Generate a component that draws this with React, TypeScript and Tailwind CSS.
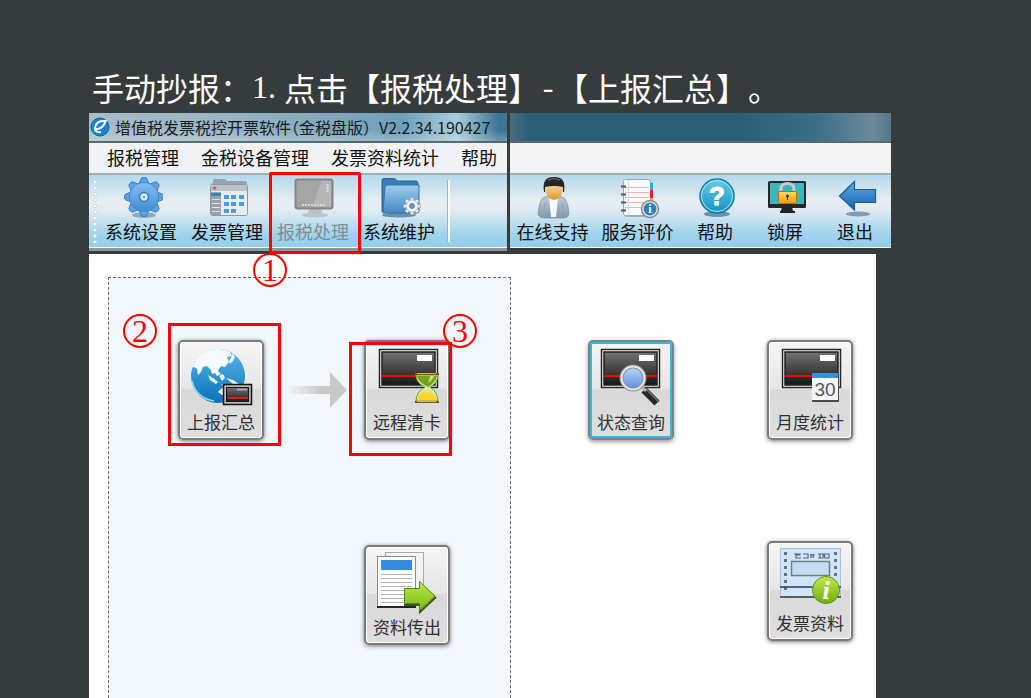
import React from "react";

interface ToolItem {
     label: string;
     width: string;
     icon: React.ReactNode;
     disabled?: boolean;
     step?: number;
}

const GEAR_TEETH = [0, 45, 90, 135, 180, 225, 270, 315];

function ToolSvg({ children }: { children: React.ReactNode }) {
     return (
          <svg className="block w-11 h-11 shrink-0" viewBox="0 0 44 44" fill="none" aria-hidden="true">
               {children}
          </svg>
     );
}

function GearIcon() {
     return (
          <ToolSvg>
               <ellipse cx="25" cy="40" rx="12" ry="3" fill="#5d7f99" opacity="0.6" />
               <g fill="#5ba3e8" stroke="#3f7fc0" strokeWidth="1">
                    {GEAR_TEETH.map((a) => (
                         <path key={a} d="M20 9 L22.500 3 Q25 2 27.500 3 L30 9 Z" transform={`rotate(${a} 25 22)`} />
                    ))}
                    <circle cx="25" cy="22" r="14.500" />
               </g>
               <circle cx="25" cy="22" r="14" fill="url(#gearBlue)" />
               <circle cx="25" cy="22" r="4.500" fill="#cfe6f8" stroke="#347abc" strokeWidth="1.500" />
               <circle cx="25" cy="22" r="1" fill="#5a93cc" />
          </ToolSvg>
     );
}

function InvoiceFolderIcon() {
     return (
          <ToolSvg>
               <path d="M8 8 V5 Q8 4 10 4 H19 Q21 4 22 6 H40 Q42 6 42 8 V14 H6 V9 Z" fill="#93a5b4" />
               <rect x="5.500" y="9.500" width="37" height="31" rx="2" fill="#e8ecef" stroke="#8d979f" />
               <path d="M6 10 H42 V16 H6 Z" fill="#b9c1c7" />
               <ellipse cx="9.500" cy="13" rx="2" ry="1.500" fill="#e2574c" />
               <rect x="6" y="17" width="10" height="23" fill="#9ba3aa" />
               <rect x="6" y="18" width="10" height="3" fill="#2d86cc" />
               <path d="M7 24.500 H15 M7 28.500 H15 M7 32.500 H15 M7 36.500 H15" stroke="#dde2e5" />
               <path d="M19 20h5v4h-5z M26 20h5v4h-5z M34 20h5v4h-5z M19 27h5v4h-5z M26 27h5v4h-5z M34 27h5v4h-5z M19 34h5v4h-5z M26 34h5v4h-5z" fill="#4b9edc" />
          </ToolSvg>
     );
}

function MonitorIcon() {
     return (
          <ToolSvg>
               <ellipse cx="24" cy="40" rx="13" ry="2.500" fill="#b9c4cc" />
               <path d="M18 33 H30 L31 40 H17 Z" fill="#bfc3c6" />
               <rect x="4.500" y="4.500" width="37" height="29" rx="2" fill="#a4a4a4" stroke="#858585" strokeWidth="2" />
               <path d="M31 6 H40 V32 H21 Z" fill="#b6b6b6" />
               <path d="M11 30 H35" stroke="#d8d8d8" strokeWidth="2" strokeDasharray="2 1" />
               <path d="M36.500 9 V17" stroke="#dedede" strokeWidth="2" strokeDasharray="2 1" />
          </ToolSvg>
     );
}

function FolderGearIcon() {
     return (
          <ToolSvg>
               <ellipse cx="22" cy="40" rx="17" ry="2.500" fill="#6b8ea5" />
               <path d="M5 37 V5 Q5 3.500 7 3.500 H17 Q19 3.500 20 6 H39 Q41 6 41 8 V37 Z" fill="#3a7db4" stroke="#2a659a" />
               <path d="M8 12 L10 10 H42 V36 Q42 38 40 38 H6 Z" fill="url(#folderBlue)" stroke="#2f74b0" />
               <g fill="#eef2f4" stroke="#93a0aa" strokeWidth="0.700">
                    {GEAR_TEETH.map((a) => (
                         <path key={a} d="M33 26 L33.500 22.500 H36.500 L37 26 Z" transform={`rotate(${a} 35 31)`} />
                    ))}
                    <circle cx="35" cy="31" r="6" />
               </g>
               <circle cx="35" cy="31" r="5.500" fill="#eef2f4" />
               <circle cx="35" cy="31" r="2.500" fill="#5a93c0" stroke="#7b8994" />
          </ToolSvg>
     );
}

function PersonIcon() {
     return (
          <ToolSvg>
               <path d="M7 39 Q8 26 12 23 Q17 20 22 20 Q28 20 33 23 Q37 26 38 39 Q37 43 32 43 H13 Q8 43 7 39 Z" fill="url(#suit)" stroke="#778fa3" strokeWidth="0.700" />
               <path d="M18 22 H27 L25 42 H20 Z" fill="#f6f9fb" />
               <path d="M14 28 L12 42 M31 28 L33 42" stroke="#8ba0b2" />
               <path d="M14 10 Q14 24 23 25 Q32 24 32 10 Z" fill="url(#skin)" />
               <path d="M13 17 Q11 6 17 3 Q23 1 29 3 Q35 6 33 17 H32 V12 Q23 10 14 12 V17 Z" fill="#262626" />
               <path d="M17 5 Q23 2 29 5" stroke="#777777" />
          </ToolSvg>
     );
}

function NotebookIcon() {
     return (
          <ToolSvg>
               <rect x="8" y="6" width="28" height="36" rx="2" fill="#7f929f" opacity="0.600" />
               <rect x="7.500" y="4.500" width="27" height="36" rx="2" fill="#fafafa" stroke="#a2a7aa" />
               <path d="M9 12.500 H33 M9 17.500 H33 M9 22.500 H33 M9 27.500 H33 M9 32.500 H29" stroke="#f1b2ad" />
               <path d="M12.500 5 V40" stroke="#bfe3f2" />
               <path d="M5 11.500 H10 M5 19.500 H10 M5 27.500 H10 M5 35.500 H10" stroke="#545454" strokeWidth="2" />
               <path d="M34 8h3v7h-3z" fill="#24b2dc" />
               <path d="M34 15h3v8h-3z" fill="#dd2338" />
               <path d="M34 23h3v4h-3z" fill="#f0ad2c" />
               <circle cx="34" cy="34" r="8.500" fill="#e6ecec" stroke="#858c8c" strokeWidth="1.500" />
               <circle cx="34" cy="34" r="6.500" fill="#347fb9" />
               <text x="34" y="38" fill="#ffffff" fontSize="12" fontWeight="700" fontFamily="Liberation Serif, serif" textAnchor="middle">i</text>
          </ToolSvg>
     );
}

function HelpIcon() {
     return (
          <ToolSvg>
               <ellipse cx="24" cy="39" rx="13" ry="3" fill="#3c6f8c" opacity="0.700" />
               <circle cx="24" cy="21" r="17" fill="url(#helpBlue)" stroke="#1680ae" strokeWidth="1.500" />
               <circle cx="24" cy="21" r="15.500" stroke="#a4e4f3" />
               <text x="24" y="30" fill="#ffffff" stroke="#ffffff" fontSize="26" fontWeight="700" fontFamily="Liberation Sans, sans-serif" textAnchor="middle">?</text>
          </ToolSvg>
     );
}

function LockScreenIcon() {
     return (
          <ToolSvg>
               <path d="M19 32 H29 L30 36 H32 V38 H17 V36 H18 Z" fill="#222222" />
               <rect x="5" y="6" width="38" height="27" rx="1.500" fill="#262626" />
               <rect x="7" y="8" width="34" height="21" fill="#35b8bf" />
               <path d="M18 17 V14 Q18 8.500 24.500 8.500 Q31 8.500 31 14 V17" stroke="#c5c9cc" strokeWidth="3" />
               <rect x="15.500" y="16.500" width="18" height="12" rx="1" fill="url(#lockGold)" stroke="#a6750d" />
               <circle cx="24.500" cy="21" r="1.500" fill="#493008" />
               <path d="M24.500 21 V25" stroke="#493008" />
          </ToolSvg>
     );
}

function ExitIcon() {
     return (
          <ToolSvg>
               <ellipse cx="25" cy="39" rx="12" ry="2.500" fill="#708999" opacity="0.800" />
               <path d="M6.500 21 L21.500 6.500 V14.500 H42.500 V27.500 H21.500 V35 Z" fill="url(#exitBlue)" stroke="#175d9e" strokeWidth="1.200" />
          </ToolSvg>
     );
}

function CardSvg({ children }: { children: React.ReactNode }) {
     return (
          <svg className="block w-[66px] h-[66px] shrink-0" viewBox="0 0 66 66" fill="none" aria-hidden="true">
               {children}
          </svg>
     );
}

function Screen() {
     return (
          <>
               <rect x="5.500" y="4.500" width="58" height="38" fill="#f4f4f4" stroke="#262626" strokeWidth="1.500" />
               <rect x="8" y="7" width="53" height="33" fill="url(#screenDark)" stroke="#202020" strokeWidth="1.500" />
               <rect x="43" y="10" width="15" height="6" fill="#ffffff" />
               <path d="M8 31 H61" stroke="#fa0000" strokeWidth="2" />
          </>
     );
}

function GlobeIcon() {
     return (
          <CardSvg>
               <circle cx="30" cy="31" r="27" fill="url(#globe)" />
               <path d="M8 15 Q14 7 22 5 Q33 2 42 7 L44 11 L39 12 L41 17 L37 22 L33 21 L30 26 L33 29 L29 31 L27 28 L24 29 L23 25 L19 21 L15 22 L13 27 L10 30 L9 24 L6 22 L4 23 Z" fill="#f5fafd" />
               <path d="M44 8 L47 12 L45 16 L42 19 L41 16 L43 13 Z M20 30 L25 33 L30 37 L28 39 L22 35 Z M31 31 L35 29 L37 33 L34 36 Z M38 33 L45 35 L51 39 L45 39 Z M33 39 L40 40 L36 42 Z" fill="#edf6fb" />
               <path d="M30 47 L34 43 L41 44 L40 51 L34 50 Z" fill="#f5fafd" />
               <path d="M4 36 Q8 53 26 56" stroke="#8bd5f3" strokeWidth="1.500" />
               <rect x="35.500" y="39.500" width="28" height="20" fill="#b8b8b8" stroke="#151515" strokeWidth="1.500" />
               <rect x="38.500" y="42.500" width="22" height="14" fill="url(#screenDark)" stroke="#151515" />
               <path d="M49 44.500 H59" stroke="#a8a8a8" strokeWidth="2" />
               <path d="M40 53 H60" stroke="#d32020" strokeWidth="2" />
          </CardSvg>
     );
}

function HourglassIcon() {
     return (
          <CardSvg>
               <Screen />
               <path d="M42 30 H64 Q64 38 56 42 Q64 47 64 56 H42 Q42 47 51 42 Q42 38 42 30 Z" fill="#d5eb9f" stroke="#779e35" />
               <path d="M43 31 H63 Q62 37 54 42 Q44 37 43 31 Z" fill="#72a41f" />
               <path d="M56 31 H60 Q59 35 54 38 Q56 34 56 31 Z" fill="#c9e27e" />
               <path d="M43 55 Q45 47 53 47 Q61 47 63 55 Z" fill="#ffd529" />
               <path d="M41 29 H65 M41 57 H65" stroke="#805716" strokeWidth="2" />
               <path d="M43 28.500 H62 M43 56.500 H62" stroke="#d8b05c" />
          </CardSvg>
     );
}

function MagnifierIcon() {
     return (
          <CardSvg>
               <g transform="translate(-2 0)">
                    <Screen />
               </g>
               <path d="M46 45 L59 58" stroke="#292929" strokeWidth="7" />
               <path d="M48 44 L61 57" stroke="#777777" strokeWidth="1.500" />
               <path d="M43 41 L48 46" stroke="#b0b0b0" strokeWidth="3" />
               <circle cx="35" cy="33" r="11.500" fill="url(#lens)" stroke="#8e9295" strokeWidth="4" />
               <circle cx="35" cy="33" r="11.500" stroke="#e4e6e8" strokeWidth="2" />
          </CardSvg>
     );
}

function CalendarIcon() {
     return (
          <CardSvg>
               <Screen />
               <rect x="35" y="29" width="27" height="28" rx="1" fill="#4b4b4b" />
               <rect x="35" y="28" width="26" height="27" fill="#f7f7f7" />
               <rect x="35" y="28" width="26" height="5" fill="#3c8fd9" />
               <text x="48" y="51" fill="#555555" fontSize="19" fontFamily="Liberation Sans, sans-serif" textAnchor="middle">30</text>
          </CardSvg>
     );
}

function ExportIcon() {
     return (
          <CardSvg>
               <rect x="11.500" y="2.500" width="38" height="48" fill="#f3f3f3" stroke="#a8a8a8" />
               <rect x="3.500" y="6.500" width="38" height="50" fill="#fbfbfb" stroke="#8b8b8b" />
               <path d="M3 57 H42" stroke="#252525" strokeWidth="2" />
               <rect x="7" y="10" width="31" height="10" fill="#358bdb" />
               <path d="M7 24.500 H38 M7 28.500 H38 M7 32.500 H38 M7 36.500 H38 M7 40.500 H38 M7 44.500 H38 M7 48.500 H38 M7 52.500 H38" stroke="#b3b3b3" />
               <path d="M30 55 H46 V62 L62 47" stroke="#3f5425" strokeWidth="2" />
               <path d="M30.500 38.500 H45.500 V31.500 L61 46 L45.500 60.500 V53.500 H30.500 Z" fill="url(#arrowGreen)" stroke="#558714" />
          </CardSvg>
     );
}

function InvoiceInfoIcon() {
     return (
          <CardSvg>
               <rect x="3.500" y="2.500" width="60" height="48" fill="#cfe5fb" stroke="#a8c5e0" />
               <path d="M8.500 6 V44 M58.500 6 V31" stroke="#68717a" strokeWidth="3" strokeDasharray="3 4" />
               <path d="M17 8h6v1h-4v3h5 M26 8h5v4h-5 M34 8v4 M33 9h5 M36 8v4 M41 8h5v4h-5 M43 8v4 M47 8h5v4h-4z" stroke="#5b646c" strokeWidth="1.200" />
               <rect x="14.500" y="15.500" width="38" height="14" fill="#c4dcf2" stroke="#717f8b" strokeWidth="1.500" />
               <path d="M3 41 H64 M3 51 H64" stroke="#303a43" strokeWidth="1.500" />
               <circle cx="49" cy="44" r="13.500" fill="url(#infoGreen)" stroke="#609515" />
               <text x="49" y="53" fill="#ffffff" fontSize="26" fontWeight="700" fontStyle="italic" fontFamily="Liberation Serif, serif" textAnchor="middle">i</text>
          </CardSvg>
     );
}

// Gradients shared by all of the icons
function IconGradients() {
     const stops: [string, string, string][] = [
          ["gearBlue", "#82bdf2", "#438ed8"],
          ["folderBlue", "#9fcbee", "#4389c4"],
          ["suit", "#c3d0db", "#7e98ae"],
          ["skin", "#f7d5a0", "#d99a30"],
          ["helpBlue", "#67cce6", "#1591c4"],
          ["lockGold", "#ffda58", "#ec9d12"],
          ["exitBlue", "#5ba9e5", "#1762ad"],
          ["screenDark", "#737373", "#171717"],
          ["globe", "#57b8ea", "#0871b8"],
          ["lens", "#bad7fb", "#5c8edc"],
          ["arrowGreen", "#bdea45", "#75b816"],
          ["infoGreen", "#c5e84b", "#71ae0e"],
     ];
     return (
          <svg className="absolute w-0 h-0" aria-hidden="true">
               <defs>
                    {stops.map(([id, from, to]) => (
                         <linearGradient key={id} id={id} x1="0" y1="0" x2="0" y2="1">
                              <stop offset="0" stopColor={from} />
                              <stop offset="1" stopColor={to} />
                         </linearGradient>
                    ))}
                    <linearGradient id="flow" x1="0" y1="0" x2="1" y2="0">
                         <stop offset="0" stopColor="#c8c8c8" stopOpacity="0" />
                         <stop offset="0.6" stopColor="#c8c8c8" />
                    </linearGradient>
               </defs>
          </svg>
     );
}

function StepBadge({ step, place }: { step: number; place: string }) {
     return (
          <span className={`absolute z-20 flex items-center justify-center w-[34px] h-[34px] rounded-full border-2 border-[#ff0000] text-[#ff0000] font-["Liberation_Serif",serif] text-[32px] leading-none ${place}`}>
               {step}
          </span>
     );
}

function ToolButton({ item }: { item: ToolItem }) {
     return (
          <div className={`relative shrink-0 ${item.width}`}>
               <button
                    type="button"
                    disabled={item.disabled}
                    className="flex w-full flex-col items-center text-[18px] leading-6 whitespace-nowrap text-[#101010] disabled:text-[#858b90]"
               >
                    {item.icon}
                    {item.label}
               </button>
               {item.step && (
                    <>
                         <span className="pointer-events-none absolute z-10 -left-px -top-[3px] -right-[5px] -bottom-[7px] rounded-[2px] border-3 border-[#ff0000]" />
                         <StepBadge step={item.step} place="-left-[17px] top-[78px]" />
                    </>
               )}
          </div>
     );
}

function Card({ label, icon, active, place = "", children }: {
     label: string;
     icon: React.ReactNode;
     active?: boolean;
     place?: string;
     children?: React.ReactNode;
}) {
     return (
          <div className={`relative ${place}`}>
               <button
                    type="button"
                    className={`flex h-[100px] w-full flex-col items-center rounded-[5px] border-2 pt-[3px] text-[17px] leading-[22px] whitespace-nowrap text-[#303030] bg-[linear-gradient(#f5f5f5,#e6e6e6_48%,#d9d9d9_50%,#dedede)] ${
                         active
                              ? "border-[#788489] shadow-[inset_0_0_0_2px_#35b5e8,0_2px_4px_#0006]"
                              : "border-[#7b7b7b] shadow-[inset_0_0_0_1px_#ffffff,0_1px_4px_#0008]"
                    }`}
               >
                    {icon}
                    {label}
               </button>
               {children}
          </div>
     );
}

const menus = ["报税管理", "金税设备管理", "发票资料统计", "帮助"];

const leftTools: ToolItem[] = [
     { label: "系统设置", width: "w-[86px]", icon: <GearIcon /> },
     { label: "发票管理", width: "w-[86px]", icon: <InvoiceFolderIcon /> },
     { label: "报税处理", width: "w-[86px]", icon: <MonitorIcon />, disabled: true, step: 1 },
     { label: "系统维护", width: "w-[86px]", icon: <FolderGearIcon /> },
];

const rightTools: ToolItem[] = [
     { label: "在线支持", width: "w-[85px]", icon: <PersonIcon /> },
     { label: "服务评价", width: "w-[85px]", icon: <NotebookIcon /> },
     { label: "帮助", width: "w-[70px]", icon: <HelpIcon /> },
     { label: "锁屏", width: "w-[70px]", icon: <LockScreenIcon /> },
     { label: "退出", width: "w-[70px]", icon: <ExitIcon /> },
];

export default function App() {
     return (
          <div className='flex min-h-screen flex-col bg-[#363b3b] pl-[89px] font-["Noto_Sans_CJK_SC",sans-serif]'>
               <IconGradients />

               {/* Instruction line */}
               <h1 className="flex pl-[3px] pt-16 pb-[2px] text-[32px] leading-[47px] whitespace-nowrap text-white [text-spacing-trim:space-all]">
                    手动抄报：
                    <span className='w-4 text-center font-["Liberation_Serif",serif]'>1</span>
                    <span className='w-4 font-["Liberation_Serif",serif]'>.</span>
                    点击【报税处理】
                    <span className='w-4 text-center font-["Liberation_Serif",serif]'>-</span>
                    【上报汇总】。
               </h1>

               {/* Application window, split in two */}
               <header className="mr-[140px] grid grid-cols-[418fr_381fr] items-start gap-[3px]">
                    <div className="border-b-3 border-[#8d979b]">
                         <div className="flex h-7 items-center overflow-hidden bg-[linear-gradient(#ffffff00_60%,#ffffff40),linear-gradient(90deg,#a9bec9,#96b4c3_35%,#7fa8bc_58%,#6da0bd_75%,#a8cddd_88%,#3c7597_98%)] text-[16px] whitespace-nowrap text-[#161c20]">
                              <svg className="ml-px h-5 w-5 shrink-0" viewBox="0 0 20 20" fill="none" aria-hidden="true">
                                   <circle cx="10" cy="10" r="9" fill="#1684d4" stroke="#0862a9" />
                                   <path d="M15 4 Q6 3 5 11 Q5 16 11 15 M5 12 Q13 13 16 3" stroke="#ffffff" strokeWidth="2" />
                              </svg>
                              <span className="ml-[5px] [font-feature-settings:'halt']">增值税发票税控开票软件（金税盘版）</span>
                              <span className="ml-2">V2.2.34.190427</span>
                         </div>
                         <nav className="flex h-[34px] items-center gap-[22px] border-t-2 border-b-2 border-t-[#596970] border-b-[#a9adaf] bg-[#f1f2f3] pb-[2px] pl-[18px] text-[18px] whitespace-nowrap text-[#111111]">
                              {menus.map((menu) => (
                                   <button key={menu} type="button">{menu}</button>
                              ))}
                         </nav>
                         <div className="flex h-[73px] border-b border-white bg-[linear-gradient(#b4d9ed,#e9eef1_38%,#e0ebf1_50%,#9bd2ec_85%,#95cfea)] pl-1">
                              <span className="mr-px mt-1 h-[64px] w-1 shrink-0 bg-[radial-gradient(circle,#ffffff_1px,#b4c1c8_2px,transparent_2px)] bg-[length:4px_6px]" />
                              {leftTools.map((item) => (
                                   <ToolButton key={item.label} item={item} />
                              ))}
                              <span className="ml-[6px] mt-[5px] h-[62px] w-[2px] bg-white shadow-[-1px_0_0_#9db4c0]" />
                         </div>
                    </div>

                    <div>
                         <div className="h-7 bg-[linear-gradient(90deg,#4b6c80,#296078_5%,#296078_60%,#396f86_80%,#6b899b_95%,#557789)]" />
                         <div className="h-[34px] border-t-2 border-b-2 border-t-[#596970] border-b-[#a9adaf] bg-[#f3f3f3]" />
                         <div className="flex h-[73px] overflow-hidden border-b border-white bg-[linear-gradient(#b4d9ed,#e9eef1_38%,#dce9f1_50%,#a4d5ee_80%,#92cbe9)]">
                              {rightTools.map((item) => (
                                   <ToolButton key={item.label} item={item} />
                              ))}
                         </div>
                    </div>
               </header>

               {/* Work flow */}
               <main className="mr-[155px] mt-[3px] grid flex-1 grid-cols-[403fr_365fr] bg-white pl-[19px] pt-[23px]">
                    <section className="grid grid-cols-[86px_1fr_86px] content-start gap-y-[105px] border border-b-0 border-dashed border-[#666a6e] bg-[#f2f7fc] pl-[69px] pr-[60px] pt-[62px]">
                         <Card label="上报汇总" icon={<GlobeIcon />}>
                              <span className="pointer-events-none absolute z-10 -left-[10px] -top-[17px] -right-[17px] -bottom-[6px] border-3 border-[#ff0000]" />
                              <StepBadge step={2} place="-left-[55px] -top-[26px]" />
                         </Card>
                         <svg className="ml-[22px] mt-8 w-[62px] h-9" viewBox="0 0 62 36" aria-hidden="true">
                              <path d="M0 14 H44 V0 L61 18 L44 36 V22 H0 Z" fill="url(#flow)" />
                         </svg>
                         <Card label="远程清卡" icon={<HourglassIcon />}>
                              <span className="pointer-events-none absolute z-10 -left-[15px] top-[2px] -right-[2px] -bottom-4 border-3 border-[#ff0000]" />
                              <StepBadge step={3} place="left-[79px] -top-[26px]" />
                         </Card>
                         <Card label="资料传出" icon={<ExportIcon />} place="col-start-3" />
                    </section>

                    <section className="grid grid-cols-[86px_1fr_86px] content-start gap-y-[101px] pl-[77px] pr-[23px] pt-[63px]">
                         <Card label="状态查询" icon={<MagnifierIcon />} active />
                         <Card label="月度统计" icon={<CalendarIcon />} place="col-start-3" />
                         <Card label="发票资料" icon={<InvoiceInfoIcon />} place="col-start-3" />
                    </section>
               </main>
          </div>
     );
}
